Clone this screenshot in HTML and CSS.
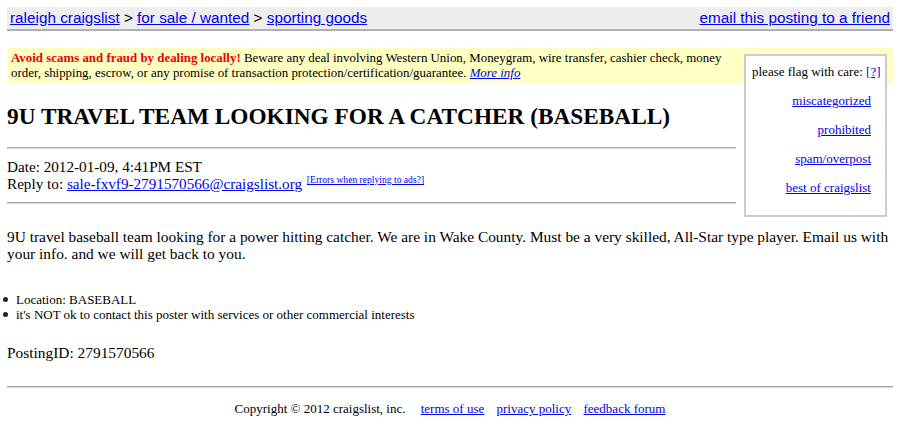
FILE: index.html
```html
<!DOCTYPE html>
<html>
<head>
<meta charset="utf-8">
<title>9U TRAVEL TEAM LOOKING FOR A CATCHER (BASEBALL)</title>
<link rel="stylesheet" href="styles.css">
</head>
<body>
<div class="page">
<div class="bchead">
  <div class="crumbs"><a href="#">raleigh craigslist</a> &gt; <a href="#">for sale / wanted</a> &gt; <a href="#">sporting goods</a></div>
  <a href="#" class="email">email this posting to a friend</a>
</div>
<div class="notice">
  <div class="flags">
    <div class="flaghead">please flag with care: <a href="#">[?]</a></div>
    <a href="#" class="flag">miscategorized</a>
    <a href="#" class="flag">prohibited</a>
    <a href="#" class="flag">spam/overpost</a>
    <a href="#" class="flag">best of craigslist</a>
  </div>
  <b class="warn">Avoid scams and fraud by dealing locally!</b> Beware any deal involving Western Union, Moneygram, wire transfer, cashier check, money order, shipping, escrow, or any promise of transaction protection/certification/guarantee. <a href="#" class="more">More info</a>
</div>
<h2 class="title">9U TRAVEL TEAM LOOKING FOR A CATCHER (BASEBALL)</h2>
<hr class="rule">
<div class="meta">
  <div>Date: 2012-01-09, 4:41PM EST</div>
  <div>Reply to: <a href="#">sale-fxvf9-2791570566@craigslist.org</a> <sup class="errs"><a href="#">[Errors when replying to ads?]</a></sup></div>
</div>
<hr class="rule">
<div class="userbody">9U travel baseball team looking for a power hitting catcher. We are in Wake County. Must be a very skilled, All-Star type player. Email us with your info. and we will get back to you.</div>
<ul class="blurbs">
  <li>Location: BASEBALL</li>
  <li>it's NOT ok to contact this poster with services or other commercial interests</li>
</ul>
<div class="pid">PostingID: 2791570566</div>
<hr class="rule">
<div class="footer">
  <span class="copy">Copyright © 2012 craigslist, inc.</span>
  <a href="#">terms of use</a>
  <a href="#">privacy policy</a>
  <a href="#">feedback forum</a>
</div>
</div>
</body>
</html>
```
FILE: styles.css
```css
html, body {
  background: #fff;
}
body {
  margin: 0;
  padding: 0;
  font-family: "Liberation Serif", "Times New Roman", serif;
  font-size: 15.4px;
  color: #000;
}
.page {
  padding: 7px 7px 0;
}
a {
  color: #0000ee;
}
.bchead {
  display: flex;
  justify-content: space-between;
  align-items: center;
  background: #eeeeee;
  border-bottom: 2px solid #b0b0b0;
  padding: 2px 3px;
  font-family: "Liberation Sans", Arial, sans-serif;
  font-size: 15.3px;
  line-height: 18px;
}
.notice {
  margin-top: 17px;
  background: #ffffc4;
  padding: 3px 4px;
  font-size: 12.9px;
  line-height: 15px;
}
.warn {
  color: #ee0000;
}
.more {
  font-style: italic;
}
.flags {
  float: right;
  width: 127px;
  margin: 3px 2px 0 8px;
  padding: 8px 6px 19px 6px;
  border: 2px solid #cccccc;
  background: #fff;
  font-size: 13px;
  line-height: 16px;
  text-align: right;
}
.flaghead {
  text-align: left;
  white-space: nowrap;
}
.flag {
  display: block;
  margin: 13px 8px 0 0;
}
.title {
  margin: 18px 0 0;
  font-size: 23.3px;
  line-height: 28px;
  font-weight: bold;
}
.rule {
  overflow: hidden;
  height: 0;
  border: 0;
  border-top: 1px solid #a8a8a8;
  border-bottom: 1px solid #d8d8d8;
  margin: 17px 0 9px;
}
.meta {
  font-size: 15.2px;
  line-height: 17px;
}
.meta + .rule {
  margin-top: 10px;
}
.errs {
  font-size: 9.6px;
  line-height: 0;
  margin-left: 1px;
}
.userbody {
  margin-top: 24px;
  line-height: 17px;
}
.blurbs {
  margin: 30px 0 0 -4px;
  padding: 0;
  list-style: none;
  font-size: 13px;
  line-height: 15px;
}
.blurbs li {
  display: flex;
  align-items: flex-start;
}
.blurbs li::before {
  content: "";
  flex: none;
  width: 5px;
  height: 5px;
  border-radius: 50%;
  background: #222;
  margin: 5px 8px 0 0;
}
.pid {
  margin-top: 22px;
  line-height: 18px;
}
.pid + .rule {
  margin: 24px 0 0;
}
.footer {
  text-align: center;
  font-size: 13px;
  line-height: 16px;
  margin-top: 13px;
}
.footer a {
  margin-left: 9px;
}
.footer .copy {
  margin-right: 3px;
}
```
